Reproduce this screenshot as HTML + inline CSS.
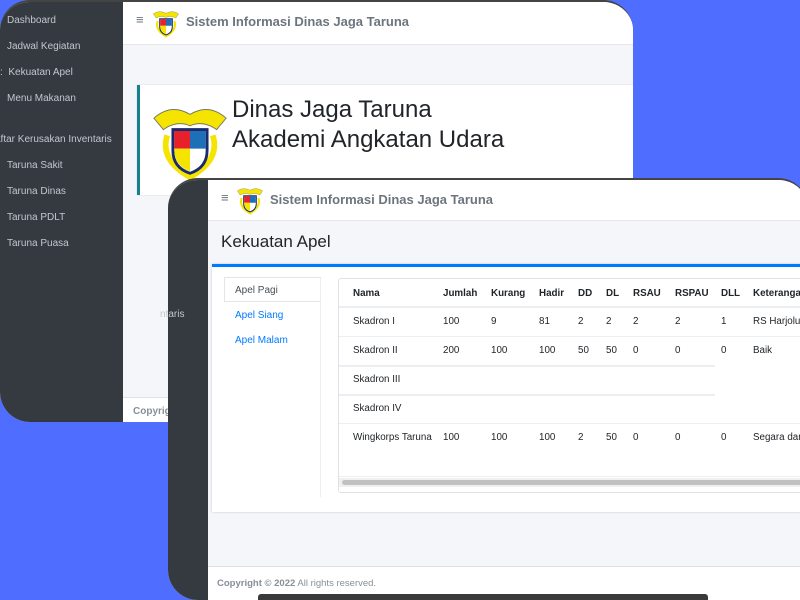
<!DOCTYPE html>
<html><head><meta charset="utf-8"><style>
*{margin:0;padding:0;box-sizing:border-box}
body{width:800px;height:600px;overflow:hidden;background:#4f6eff;font-family:"Liberation Sans",sans-serif;position:relative}
.abs{position:absolute}
.win1{left:0;top:0;width:633px;height:422px;border-radius:30px 30px 0 30px;overflow:hidden;background:#f4f6f9;border-top:2px solid #444}
.win2{left:168px;top:178px;width:640px;height:422px;border-radius:30px 30px 0 30px;overflow:hidden;background:#f4f6f9;border-top:2px solid #444}
.side{background:#343a40;color:#c2c7d0;font-size:10px}
.nav div{position:absolute;left:7px;white-space:nowrap}
.hdr{background:#fff;border-bottom:1px solid #e5e7ea}
.ttl{color:#6c757d;font-weight:bold;font-size:13px}
table{border-collapse:collapse;font-size:9.8px;color:#212529}
th{font-weight:bold;text-align:left;height:28px}
td{height:29px}
.ln{position:absolute;left:0;height:1px;background:#eceff2}
</style></head><body>

<div class="abs win1">
  <div class="abs side" style="left:0;top:0;width:123px;height:422px">
    <div class="nav">
      <div style="top:13px">Dashboard</div>
      <div style="top:39px">Jadwal Kegiatan</div>
      <div style="top:65px;left:0">: &nbsp;Kekuatan Apel</div>
      <div style="top:91px">Menu Makanan</div>
      <div style="top:132px;left:-5px">aftar Kerusakan Inventaris</div>
      <div style="top:158px">Taruna Sakit</div>
      <div style="top:184px">Taruna Dinas</div>
      <div style="top:210px">Taruna PDLT</div>
      <div style="top:236px">Taruna Puasa</div>
    </div>
  </div>
  <div class="abs hdr" style="left:123px;top:0;width:510px;height:43px">
    <div class="abs" style="left:13px;top:10px;color:#6c757d;font-size:13px">≡</div>
    <svg class="abs" style="left:29px;top:6px" width="28" height="30" viewBox="0 0 80 80"><path d="M4 14 Q20 2 40 12 Q60 2 76 14 L68 26 Q54 18 40 24 Q26 18 12 26Z" fill="#f5e400" stroke="#776" stroke-width="1"/><path d="M16 34 Q8 60 40 78 Q72 60 64 34" fill="none" stroke="#f5e400" stroke-width="6"/><path d="M22 28H58V50Q58 68 40 74Q22 68 22 50Z" fill="#fff" stroke="#1a2a6c" stroke-width="3"/><path d="M23.5 29.5H40V48H23.5Z" fill="#e8202a"/><path d="M40 29.5H56.5V48H40Z" fill="#1d6fb8"/><path d="M23.5 48H40V72Q24 66 23.5 50Z" fill="#f5e400"/></svg>
    <div class="abs ttl" style="left:63px;top:12px">Sistem Informasi Dinas Jaga Taruna</div>
  </div>
  <div class="abs" style="left:137px;top:83px;width:500px;height:110px;background:#fff;border-left:3px solid #17808b;box-shadow:0 0 1px rgba(0,0,0,.2)">
    <svg class="abs" style="left:12px;top:12px" width="76" height="88" viewBox="0 0 80 80"><path d="M2 16 Q20 0 40 12 Q60 0 78 16 L68 28 Q54 18 40 24 Q26 18 12 28Z" fill="#f5e400" stroke="#776" stroke-width="1"/><path d="M16 34 Q8 60 40 78 Q72 60 64 34" fill="none" stroke="#f5e400" stroke-width="6"/><path d="M22 28H58V50Q58 68 40 74Q22 68 22 50Z" fill="#fff" stroke="#1a2a6c" stroke-width="3"/><path d="M23.5 29.5H40V48H23.5Z" fill="#e8202a"/><path d="M40 29.5H56.5V48H40Z" fill="#1d6fb8"/><path d="M23.5 48H40V72Q24 66 23.5 50Z" fill="#f5e400"/></svg>
    <div class="abs" style="left:92px;top:10px;font-size:24px;line-height:30px;color:#212529">Dinas Jaga Taruna<br>Akademi Angkatan Udara</div>
  </div>
  <div class="abs" style="left:123px;top:395px;width:510px;height:27px;background:#fff;border-top:1px solid #dee2e6">
    <div class="abs" style="left:10px;top:8px;font-size:10px;font-weight:bold;color:#869099">Copyright</div>
  </div>
</div>

<div class="abs win2">
  <div class="abs side" style="left:0;top:0;width:40px;height:430px"></div>
  <div class="abs hdr" style="left:40px;top:0;width:600px;height:41px">
    <div class="abs" style="left:13px;top:10px;color:#6c757d;font-size:13px">≡</div>
    <svg class="abs" style="left:28px;top:5px" width="28" height="30" viewBox="0 0 80 80"><path d="M4 14 Q20 2 40 12 Q60 2 76 14 L68 26 Q54 18 40 24 Q26 18 12 26Z" fill="#f5e400" stroke="#776" stroke-width="1"/><path d="M16 34 Q8 60 40 78 Q72 60 64 34" fill="none" stroke="#f5e400" stroke-width="6"/><path d="M22 28H58V50Q58 68 40 74Q22 68 22 50Z" fill="#fff" stroke="#1a2a6c" stroke-width="3"/><path d="M23.5 29.5H40V48H23.5Z" fill="#e8202a"/><path d="M40 29.5H56.5V48H40Z" fill="#1d6fb8"/><path d="M23.5 48H40V72Q24 66 23.5 50Z" fill="#f5e400"/></svg>
    <div class="abs ttl" style="left:62px;top:12px">Sistem Informasi Dinas Jaga Taruna</div>
  </div>
  <div class="abs" style="left:53px;top:52px;font-size:17px;color:#212529">Kekuatan Apel</div>
  <div class="abs" style="left:44px;top:84px;width:600px;height:248px;background:#fff;border-top:3px solid #007bff;box-shadow:0 0 2px rgba(0,0,0,.2)">
    <div class="abs" style="left:12px;top:10px;width:97px;height:220px;border-right:1px solid #eee;font-size:10px">
      <div class="abs" style="left:0;top:0;width:97px;height:25px;border:1px solid #e5e5e5;border-right:none;padding:7px 10px;color:#495057">Apel Pagi</div>
      <div class="abs" style="left:11px;top:33px;color:#007bff">Apel Siang</div>
      <div class="abs" style="left:11px;top:58px;color:#007bff">Apel Malam</div>
    </div>
    <div class="abs" style="left:126px;top:11px;width:480px;height:215px;border:1px solid #dee2e6;border-radius:3px;overflow:hidden">
      <table class="abs" style="left:14px;top:0;width:500px">
        <tr><th style="width:90px">Nama</th><th style="width:48px">Jumlah</th><th style="width:48px">Kurang</th><th style="width:39px">Hadir</th><th style="width:28px">DD</th><th style="width:27px">DL</th><th style="width:42px">RSAU</th><th style="width:46px">RSPAU</th><th style="width:32px">DLL</th><th>Keterangan</th></tr>
        <tr><td>Skadron I</td><td>100</td><td>9</td><td>81</td><td>2</td><td>2</td><td>2</td><td>2</td><td>1</td><td>RS Harjolukito</td></tr>
        <tr><td>Skadron II</td><td>200</td><td>100</td><td>100</td><td>50</td><td>50</td><td>0</td><td>0</td><td>0</td><td>Baik</td></tr>
        <tr><td>Skadron III</td></tr>
        <tr><td>Skadron IV</td></tr>
        <tr><td>Wingkorps Taruna</td><td>100</td><td>100</td><td>100</td><td>2</td><td>50</td><td>0</td><td>0</td><td>0</td><td>Segara dan</td></tr>
      </table>
      <div class="ln" style="top:27px;width:480px;height:2px"></div>
      <div class="ln" style="top:57px;width:480px"></div>
      <div class="ln" style="top:86px;width:376px;height:2px"></div>
      <div class="ln" style="top:115px;width:376px;height:2px"></div>
      <div class="ln" style="top:144px;width:480px"></div>
      <div class="ln" style="top:197px;width:480px"></div>
      <div class="abs" style="left:0;top:199px;width:480px;height:9px;background:#f0f0f0"><div style="margin:2px 3px;height:5px;background:#c1c1c1;border-radius:3px"></div></div>
    </div>
  </div>
  <div class="abs" style="left:40px;top:386px;width:600px;height:44px;background:#fff;border-top:1px solid #dee2e6">
    <div class="abs" style="left:9px;top:11px;font-size:9.5px;color:#869099"><b>Copyright © 2022</b> All rights reserved.</div>
  </div>
</div>
<div class="abs" style="left:160px;top:309px;font-size:10px;color:#c2c7d0">ntaris</div>
<div class="abs" style="left:258px;top:594px;width:450px;height:6px;background:#3a3a3a;border-radius:3px 3px 0 0"></div>
</body></html>
